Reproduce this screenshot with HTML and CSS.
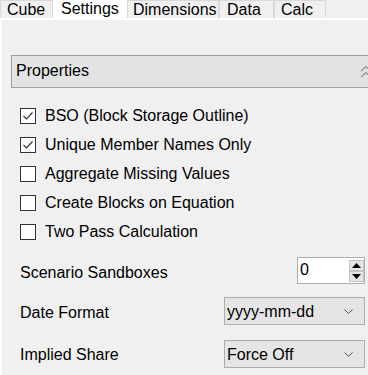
FILE: index.html
```html
<!DOCTYPE html>
<html>
<head>
<meta charset="utf-8">
<link rel="stylesheet" href="styles.css">
</head>
<body>
<div class="tabs">
  <div class="tab tab-cube">Cube</div>
  <div class="tab tab-settings active">Settings</div>
  <div class="tab tab-dims">Dimensions</div>
  <div class="tab tab-data">Data</div>
  <div class="tab tab-calc">Calc</div>
</div>
<div class="page">
  <div class="section-header">
    <span class="section-title">Properties</span>
    <svg class="collapse" width="12" height="13" viewBox="0 0 12 13">
      <polyline points="1,6 6,1.5 11,6" fill="none" stroke="#8696a8" stroke-width="1.3"/>
      <polyline points="1,12 6,7.5 11,12" fill="none" stroke="#8696a8" stroke-width="1.3"/>
    </svg>
  </div>
  <div class="checklist">
    <div class="check-row"><span class="box"><svg width="14" height="14" viewBox="0 0 14 14"><polyline points="2.5,7 5.5,10 11.5,3.5" fill="none" stroke="#333" stroke-width="1.2"/></svg></span>BSO (Block Storage Outline)</div>
    <div class="check-row"><span class="box"><svg width="14" height="14" viewBox="0 0 14 14"><polyline points="2.5,7 5.5,10 11.5,3.5" fill="none" stroke="#333" stroke-width="1.2"/></svg></span>Unique Member Names Only</div>
    <div class="check-row"><span class="box"></span>Aggregate Missing Values</div>
    <div class="check-row"><span class="box"></span>Create Blocks on Equation</div>
    <div class="check-row"><span class="box"></span>Two Pass Calculation</div>
  </div>
  <div class="form-row row-scenario">
    <span class="label label-scenario">Scenario Sandboxes</span>
    <div class="spinner">
      <span class="spin-value">0</span>
      <div class="spin-btns">
        <span class="spin-btn"><svg width="9" height="5" viewBox="0 0 9 5"><polygon points="0,5 4.5,0 9,5" fill="#000"/></svg></span>
        <span class="spin-btn"><svg width="9" height="5" viewBox="0 0 9 5"><polygon points="0,0 4.5,5 9,0" fill="#000"/></svg></span>
      </div>
    </div>
  </div>
  <div class="form-row row-date">
    <span class="label label-date">Date Format</span>
    <div class="dropdown">
      <span class="dd-value">yyyy-mm-dd</span>
      <svg class="chev" width="9" height="5" viewBox="0 0 9 5"><polyline points="0.5,0.5 4.5,4.5 8.5,0.5" fill="none" stroke="#555" stroke-width="1"/></svg>
    </div>
  </div>
  <div class="form-row row-implied">
    <span class="label label-implied">Implied Share</span>
    <div class="dropdown">
      <span class="dd-value">Force Off</span>
      <svg class="chev" width="9" height="5" viewBox="0 0 9 5"><polyline points="0.5,0.5 4.5,4.5 8.5,0.5" fill="none" stroke="#555" stroke-width="1"/></svg>
    </div>
  </div>
</div>
</body>
</html>
```
FILE: styles.css
```css
html, body {
  margin: 0;
  padding: 0;
}
body {
  background: #ffffff;
  font-family: "Liberation Sans", Arial, sans-serif;
  font-size: 16px;
  color: #000;
  overflow: hidden;
  width: 368px;
  height: 375px;
}
.tabs {
  display: flex;
  align-items: flex-start;
  height: 18px;
  background: #f0f0f0;
}
.tab {
  box-sizing: border-box;
  height: 18px;
  border: 1px solid #d9d9d9;
  border-bottom: none;
  padding: 1px 0 0 6px;
  line-height: 16px;
  background: #f0f0f0;
  white-space: nowrap;
  flex: none;
}
.tab.active {
  height: 20px;
  background: #ffffff;
  border-color: #ffffff;
  padding: 0 0 0 7px;
  position: relative;
  z-index: 1;
}
.tab-cube { width: 53px; }
.tab-settings { width: 74px; }
.tab-dims { width: 92px; padding-left: 5px; }
.tab-data { width: 55px; padding-left: 7px; }
.tab-calc { width: 52px; }

.page {
  margin: 2px 0 0 2px;
  background: #f0f0f0;
  height: 355px;
  box-sizing: border-box;
  padding: 35px 0 0 9px;
  overflow: hidden;
}
.section-header {
  display: flex;
  align-items: center;
  box-sizing: border-box;
  height: 33px;
  margin-right: -30px;
  border: 1px solid #a0a0a0;
  border-right: none;
  background: #e3e3e3;
  padding: 0 0 2px 4px;
  line-height: 29px;
}
.section-title {
  flex: 1;
}
.collapse {
  margin-right: 26px;
  margin-top: 2px;
}
.checklist {
  margin-top: 13px;
  padding-left: 9px;
}
.check-row {
  display: flex;
  align-items: center;
  height: 29px;
  line-height: 29px;
  white-space: nowrap;
}
.box {
  box-sizing: border-box;
  width: 16px;
  height: 16px;
  border: 1px solid #333;
  background: #fff;
  margin-right: 9px;
  display: flex;
  align-items: center;
  justify-content: center;
  flex: none;
}
.form-row {
  display: flex;
  justify-content: space-between;
  align-items: flex-start;
  padding: 0 3px 0 9px;
}
.row-scenario { margin-top: 11px; height: 27px; }
.row-date { margin-top: 13px; height: 28px; }
.row-implied { margin-top: 15px; height: 28px; }
.label {
  white-space: nowrap;
}
.label-scenario { line-height: 27px; padding-top: 2px; }
.label-date { line-height: 28px; padding-top: 2px; }
.label-implied { line-height: 28px; padding-top: 1px; }

.spinner {
  box-sizing: border-box;
  width: 68px;
  height: 27px;
  border: 1px solid #adadad;
  background: #fff;
  display: flex;
  align-items: flex-start;
}
.spin-value {
  flex: 1;
  padding-left: 2px;
  line-height: 23px;
}
.spin-btns {
  display: flex;
  flex-direction: column;
  margin-top: 2px;
}
.spin-btn {
  box-sizing: border-box;
  width: 15px;
  height: 11px;
  background: #e5e5e5;
  border: 1px solid #c4c4c4;
  display: flex;
  align-items: center;
  justify-content: center;
}
.dropdown {
  box-sizing: border-box;
  width: 141px;
  height: 28px;
  border: 1px solid #adadad;
  background: #e5e5e5;
  display: flex;
  align-items: flex-start;
}
.dd-value {
  flex: 1;
  padding: 3px 0 0 2px;
  line-height: 22px;
  white-space: nowrap;
}
.chev {
  margin: 11px 11px 0 0;
}
```
